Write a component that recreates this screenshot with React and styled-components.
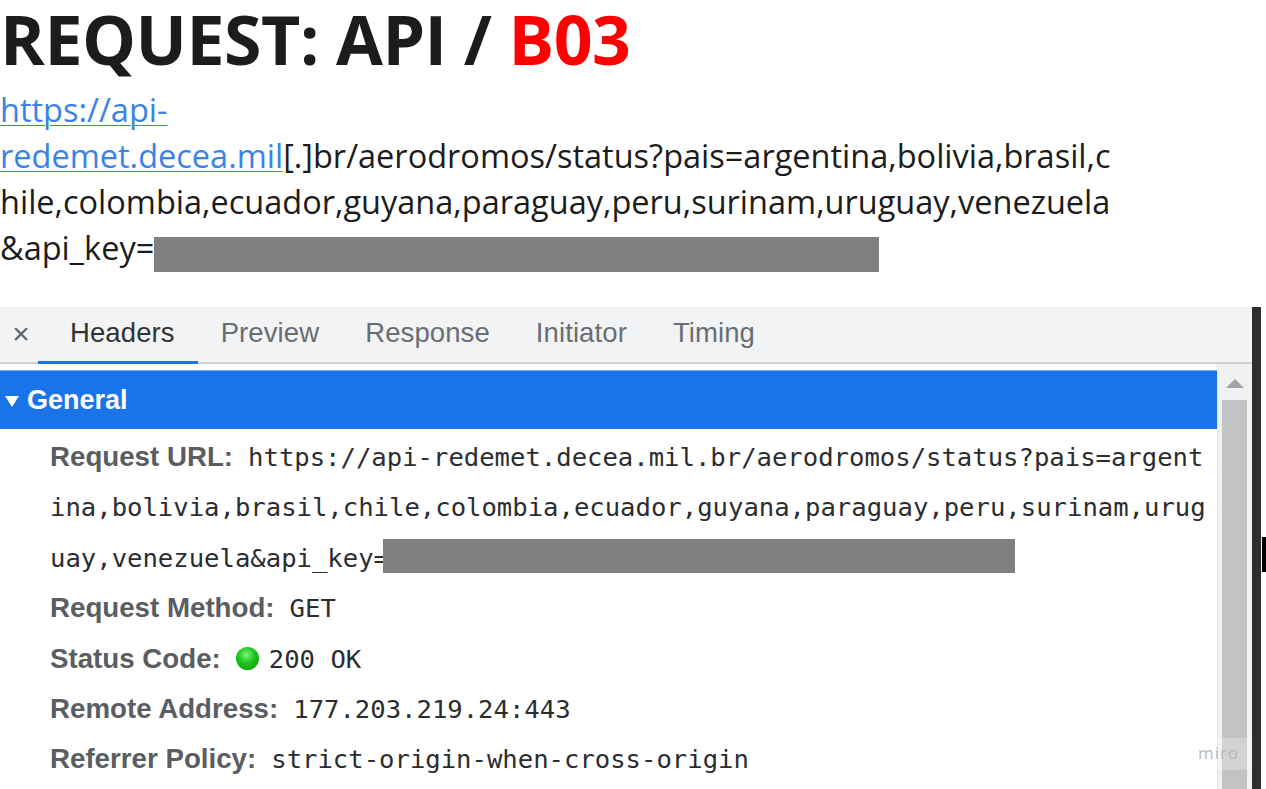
import styled, { createGlobalStyle } from "styled-components";

const GlobalStyle = createGlobalStyle`
  html, body {
    margin: 0;
    padding: 0;
    background: #fff;
    overflow: hidden;
  }
`;

const Page = styled.div`
  position: relative;
  width: 1266px;
  height: 789px;
  overflow: hidden;
  font-family: "Open Sans", sans-serif;
`;

const Title = styled.h1`
  margin: 0;
  font-family: "Open Sans", sans-serif;
  font-weight: 700;
  font-size: 68px;
  line-height: 78px;
  color: #1c1c1c;
  letter-spacing: -0.5px;
`;

const Accent = styled.span`
  color: #ff0000;
`;

const UrlBlock = styled.p`
  margin: 9px 0 0;
  font-size: 32.5px;
  line-height: 46px;
  color: #1c1c1c;
`;

const Link = styled.a`
  color: #3b82e8;
  text-decoration: underline;
  text-underline-offset: 3px;
  text-decoration-thickness: 1px;
`;

const Redacted = styled.span`
  display: inline-block;
  width: ${(p) => p.w}px;
  height: ${(p) => p.h}px;
  margin-left: ${(p) => p.ml || 0}px;
  background: #808080;
  vertical-align: ${(p) => p.va || "middle"};
`;

const Panel = styled.div`
  margin-top: 35px;
  width: 1252px;
  height: 500px;
  border-right: 9px solid #2e2e2e;
  display: flex;
  flex-direction: column;
  font-family: "Liberation Sans", Arial, sans-serif;
`;

const TabBar = styled.div`
  height: 55px;
  background: #f1f3f4;
  border-bottom: 2px solid #cfd1d4;
  display: flex;
  align-items: stretch;
`;

const Close = styled.div`
  width: 42px;
  display: flex;
  align-items: center;
  justify-content: center;
  color: #5f6368;
  font-size: 30px;
  padding-bottom: 2px;
`;

const Tab = styled.div`
  position: relative;
  display: flex;
  align-items: center;
  padding: 0 23px 3px;
  padding-left: ${(p) => (p.active ? "28px" : "23px")};
  font-size: 27.5px;
  letter-spacing: 0.1px;
  color: ${(p) => (p.active ? "#333" : "#6a6d72")};

  &::after {
    content: "";
    display: ${(p) => (p.active ? "block" : "none")};
    position: absolute;
    left: -4px;
    right: 0;
    bottom: -2px;
    height: 3px;
    background: #1a73e8;
  }
`;

const Body = styled.div`
  flex: 1;
  display: flex;
  min-height: 0;
`;

const Content = styled.div`
  flex: 1;
  padding-top: 6px;
`;

const SectionHeader = styled.div`
  height: 58px;
  background: #1a73e8;
  border-top: 1px solid #7eaef5;
  display: flex;
  align-items: center;
  padding-left: 5px;
  color: #fff;
  font-weight: 700;
  font-size: 27px;
  gap: 8px;
`;

const Caret = styled.span`
  width: 0;
  height: 0;
  border-left: 7px solid transparent;
  border-right: 7px solid transparent;
  border-top: 11px solid #fff;
  margin-top: 3px;
`;

const Rows = styled.div`
  padding: 3px 4px 0 50px;
`;

const Row = styled.div`
  font-size: 27.7px;
  line-height: 50.4px;
  word-break: break-all;
`;

const Label = styled.span`
  font-weight: 700;
  font-size: 27.7px;
  line-height: 1;
  color: #5a5d62;
  margin-right: 15px;
  word-break: normal;
`;

const Value = styled.span`
  font-family: "DejaVu Sans Mono", "Liberation Mono", monospace;
  font-size: 25.6px;
  line-height: 1;
  color: #2b2d30;
`;

const StatusDot = styled.span`
  display: inline-block;
  width: 23px;
  height: 23px;
  border-radius: 50%;
  background: radial-gradient(circle at 45% 35%, #7cf27c 0%, #19c119 45%, #0a9a0a 100%);
  vertical-align: -2px;
  margin-right: 10px;
`;

const Scrollbar = styled.div`
  width: 35px;
  background: #f1f1f1;
  border-left: 1px solid #e6e6e6;
  display: flex;
  flex-direction: column;
  align-items: center;
  padding-top: 15px;
  box-sizing: border-box;
`;

const ScrollArrow = styled.div`
  width: 0;
  height: 0;
  border-left: 9px solid transparent;
  border-right: 9px solid transparent;
  border-bottom: 9px solid #a3a3a3;
`;

const Thumb = styled.div`
  margin-top: 12px;
  width: 25px;
  margin-left: -2px;
  flex: 1;
  background: #c3c3c3;
`;

const Watermark = styled.span`
  position: absolute;
  left: 1196px;
  top: 738px;
  padding: 3px 12px 6px 2px;
  font-family: "Open Sans", sans-serif;
  font-size: 17px;
  letter-spacing: 1px;
  color: #b9b9bd;
  background: rgba(255, 255, 255, 0.25);
`;

const TextCursor = styled.span`
  position: absolute;
  left: 1262px;
  top: 537px;
  width: 4px;
  height: 35px;
  background: #000;
`;

const tabs = ["Headers", "Preview", "Response", "Initiator", "Timing"];

export default function App() {
  return (
    <Page>
      <GlobalStyle />
      <Title>
        REQUEST: API / <Accent>B03</Accent>
      </Title>
      <UrlBlock>
        <Link href="#">https://api-</Link>
        <br />
        <Link href="#">redemet.decea.mil</Link>[.]br/aerodromos/status?pais=argentina,bolivia,brasil,c
        <br />
        hile,colombia,ecuador,guyana,paraguay,peru,surinam,uruguay,venezuela
        <br />
        &amp;api_key=
        <Redacted w={725} h={35} va="-12px" />
      </UrlBlock>

      <Panel>
        <TabBar>
          <Close>×</Close>
          {tabs.map((t, i) => (
            <Tab key={t} active={i === 0}>
              {t}
            </Tab>
          ))}
        </TabBar>
        <Body>
          <Content>
            <SectionHeader>
              <Caret />
              General
            </SectionHeader>
            <Rows>
              <Row>
                <Label>Request URL:</Label>
                <Value>
                  https://api-redemet.decea.mil.br/aerodromos/status?pais=argentina,bolivia,brasil,chile,colombia,ecuador,guyana,paraguay,peru,surinam,uruguay,venezuela&amp;api_key=
                  <Redacted w={632} h={34} va="-6px" ml={-6} />
                </Value>
              </Row>
              <Row>
                <Label>Request Method:</Label>
                <Value>GET</Value>
              </Row>
              <Row>
                <Label>Status Code:</Label>
                <StatusDot />
                <Value>200 OK</Value>
              </Row>
              <Row>
                <Label>Remote Address:</Label>
                <Value>177.203.219.24:443</Value>
              </Row>
              <Row>
                <Label>Referrer Policy:</Label>
                <Value>strict-origin-when-cross-origin</Value>
              </Row>
            </Rows>
          </Content>
          <Scrollbar>
            <ScrollArrow />
            <Thumb />
          </Scrollbar>
        </Body>
      </Panel>
      <Watermark>miro</Watermark>
      <TextCursor />
    </Page>
  );
}
